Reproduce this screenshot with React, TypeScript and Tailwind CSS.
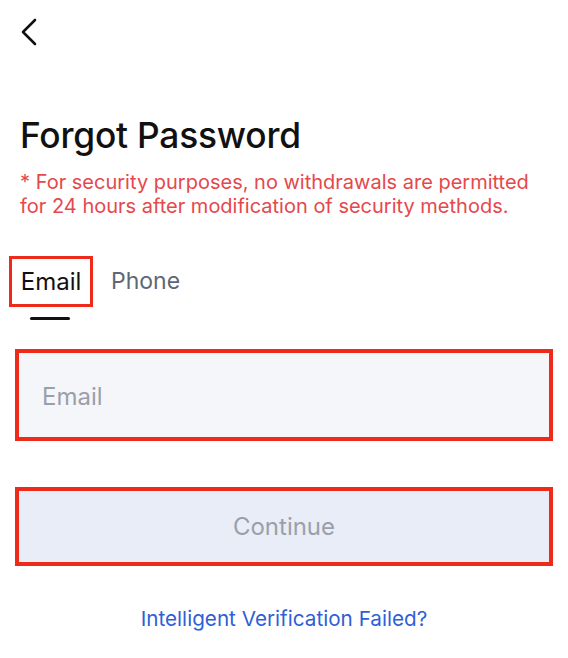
import React from "react";

export default function App() {
  return (
    <div className="w-[568px] h-[658px] bg-white overflow-hidden font-['Inter',sans-serif]">
      <div className="pt-[18px] pl-[19px]">
        <svg width="20" height="28" viewBox="0 0 20 28" fill="none">
          <path d="M16 2 L4 14 L16 26" stroke="#111" strokeWidth="2.6" strokeLinecap="round" strokeLinejoin="round" />
        </svg>
      </div>
      <h1 className="mt-[70px] ml-[20px] text-[35.3px] leading-[40px] font-medium text-[#111] tracking-[-0.2px]">Forgot Password</h1>
      <p className="mt-[14px] ml-[20px] mr-[20px] text-[20px] leading-[24px] text-[#e5484b]">
        * For security purposes, no withdrawals are permitted for 24 hours after modification of security methods.
      </p>
      <div className="mt-[38px] ml-[9px] flex items-start gap-[18px]">
        <div className="flex flex-col items-center">
          <div className="w-[84px] h-[51px] border-[3px] border-[#ee2a1b] flex items-center justify-center text-[24px] text-[#111]">Email</div>
          <div className="mt-[10px] w-[40px] h-[3px] bg-[#111] rounded-full ml-[-3px]" />
        </div>
        <div className="h-[51px] flex items-center text-[23px] text-[#5f6775]">Phone</div>
      </div>
      <div className="mt-[29px] mx-[15px] h-[92px] border-[4px] border-[#ee2a1b] bg-[#f5f6fa] flex items-center pl-[23px] pt-[4px] text-[24px] text-[#9aa0aa]">
        Email
      </div>
      <div className="mt-[46px] mx-[15px] h-[79px] border-[4px] border-[#ee2a1b] bg-[#e9edf7] flex items-center justify-center text-[24px] text-[#9aa0aa]">
        Continue
      </div>
      <div className="mt-[37px] text-center text-[20.7px] text-[#2f5fd6]">Intelligent Verification Failed?</div>
    </div>
  );
}
